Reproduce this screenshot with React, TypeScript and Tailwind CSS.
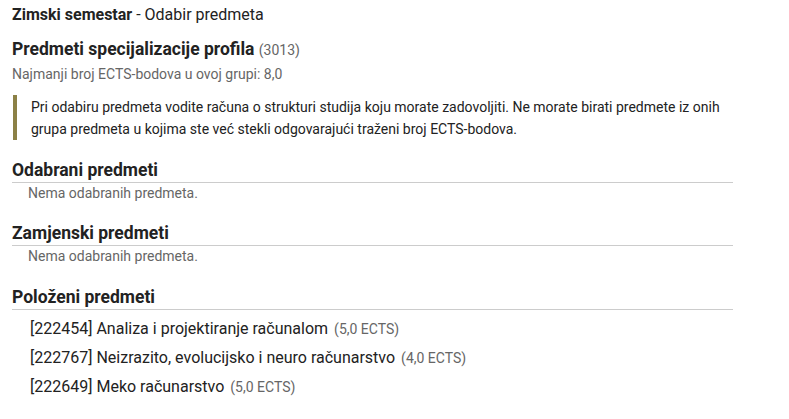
import React from 'react';

const passed = [
  { code: '222454', name: 'Analiza i projektiranje računalom', ects: '5,0' },
  { code: '222767', name: 'Neizrazito, evolucijsko i neuro računarstvo', ects: '4,0' },
  { code: '222649', name: 'Meko računarstvo', ects: '5,0' },
];

function SectionTitle({ children }: { children: React.ReactNode }) {
  return (
    <h3 className="w-[721px] border-b border-[#cccccc] text-[17.5px] font-bold leading-[24px] text-[#222]">
      {children}
    </h3>
  );
}

function Empty() {
  return <div className="pl-4 text-[14px] leading-[20px] text-[#666]">Nema odabranih predmeta.</div>;
}

export default function App() {
  return (
    <div className="min-h-[419px] bg-white px-3 pt-[3px] font-['Roboto',sans-serif] text-[#222]">
      <div className="text-[16px] leading-[24px]">
        <span className="font-bold">Zimski semestar</span> - Odabir predmeta
      </div>

      <h2 className="mt-[10px] text-[17.5px] font-bold leading-[24px]">
        Predmeti specijalizacije profila <span className="text-[14px] font-normal text-[#666]">(3013)</span>
      </h2>
      <div className="mt-[2px] text-[14px] leading-[20px] text-[#666]">Najmanji broj ECTS-bodova u ovoj grupi: 8,0</div>

      <div className="ml-[1px] mt-[11px] border-l-4 border-[#8c8146] py-[0.5px] pl-[14px] text-[14px] leading-[22px]">
        Pri odabiru predmeta vodite računa o strukturi studija koju morate zadovoljiti. Ne morate birati predmete iz onih
        <br />
        grupa predmeta u kojima ste već stekli odgovarajući traženi broj ECTS-bodova.
      </div>

      <div className="mt-[18px]">
        <SectionTitle>Odabrani predmeti</SectionTitle>
        <Empty />
      </div>

      <div className="mt-[18px]">
        <SectionTitle>Zamjenski predmeti</SectionTitle>
        <Empty />
      </div>

      <div className="mt-[19px]">
        <SectionTitle>Položeni predmeti</SectionTitle>
        <ul className="mt-[8px] flex flex-col gap-[7px] pl-[18px]">
          {passed.map((p) => (
            <li key={p.code} className="text-[16px] leading-[22px]">
              [{p.code}] {p.name}
              <span className="ml-[6px] text-[14px] text-[#666]">({p.ects} ECTS)</span>
            </li>
          ))}
        </ul>
      </div>
    </div>
  );
}
